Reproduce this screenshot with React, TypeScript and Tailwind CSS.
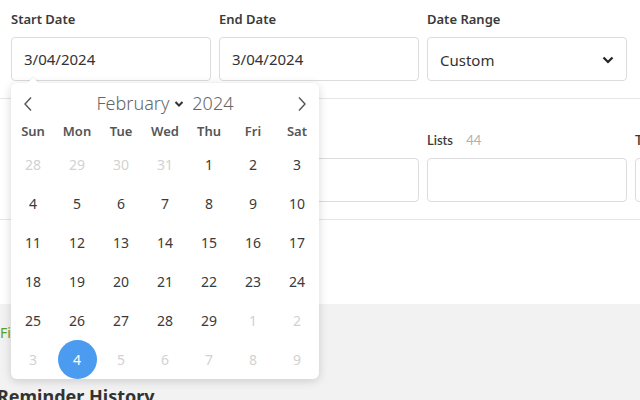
import React from "react";

const font = { fontFamily: '"Noto Sans", "Open Sans", sans-serif' };

type Cell = { d: number; muted?: boolean; selected?: boolean };

const weeks: Cell[][] = [
  [{ d: 28, muted: true }, { d: 29, muted: true }, { d: 30, muted: true }, { d: 31, muted: true }, { d: 1 }, { d: 2 }, { d: 3 }],
  [{ d: 4 }, { d: 5 }, { d: 6 }, { d: 7 }, { d: 8 }, { d: 9 }, { d: 10 }],
  [{ d: 11 }, { d: 12 }, { d: 13 }, { d: 14 }, { d: 15 }, { d: 16 }, { d: 17 }],
  [{ d: 18 }, { d: 19 }, { d: 20 }, { d: 21 }, { d: 22 }, { d: 23 }, { d: 24 }],
  [{ d: 25 }, { d: 26 }, { d: 27 }, { d: 28 }, { d: 29 }, { d: 1, muted: true }, { d: 2, muted: true }],
  [{ d: 3, muted: true }, { d: 4, selected: true }, { d: 5, muted: true }, { d: 6, muted: true }, { d: 7, muted: true }, { d: 8, muted: true }, { d: 9, muted: true }],
];

const dayNames = ["Sun", "Mon", "Tue", "Wed", "Thu", "Fri", "Sat"];

function Field({ label, children }: { label: React.ReactNode; children?: React.ReactNode }) {
  return (
    <div className="flex w-[200px] shrink-0 flex-col gap-[8px]">
      <div className="h-[20px] text-[13px] leading-[20px] font-semibold text-[#3a3a3a]">{label}</div>
      <div className="flex h-[44px] items-center rounded-[4px] border border-[#dcdcdc] bg-white px-[12px] text-[15px] text-[#333]">
        {children}
      </div>
    </div>
  );
}

function Chevron({ dir }: { dir: "left" | "right" }) {
  return (
    <svg width="10" height="16" viewBox="0 0 10 16" fill="none" stroke="#555" strokeWidth="1.4">
      {dir === "left" ? <path d="M8 1.5 L2 8 L8 14.5" /> : <path d="M2 1.5 L8 8 L2 14.5" />}
    </svg>
  );
}

function Calendar() {
  return (
    <div className="absolute left-[11px] top-[83px] h-[296px] w-[308px] rounded-[6px] bg-white shadow-[0_2px_10px_rgba(0,0,0,0.16)]">
      <div className="absolute left-[18px] top-[-4px] h-[8px] w-[8px] rotate-45 bg-white shadow-[-1px_-1px_1px_rgba(0,0,0,0.06)]" />
      <div className="relative flex h-[37px] items-center justify-between px-[12px] pt-[4px]">
        <Chevron dir="left" />
        <div className="flex items-center text-[18px] font-light text-[#666]">
          <span>February</span>
          <svg className="ml-[5px] mr-[8px]" width="10" height="8" viewBox="0 0 10 8" fill="none" stroke="#333" strokeWidth="2">
            <path d="M1.5 2 L5 5.5 L8.5 2" />
          </svg>
          <span>2024</span>
        </div>
        <Chevron dir="right" />
      </div>
      <div className="grid h-[24px] grid-cols-7 items-center">
        {dayNames.map((n) => (
          <div key={n} className="text-center text-[13px] font-semibold text-[#555]">
            {n}
          </div>
        ))}
      </div>
      <div className="mt-[1px] grid grid-cols-7">
        {weeks.flat().map((c, i) => (
          <div key={i} className="flex h-[39px] items-center justify-center">
            {c.selected ? (
              <div className="flex h-[39px] w-[39px] items-center justify-center rounded-full bg-[#4b9bf0] text-[14px] text-white">
                {c.d}
              </div>
            ) : (
              <span className={"text-[14px] " + (c.muted ? "text-[#d2d2d2]" : "text-[#3a3a3a]")}>{c.d}</span>
            )}
          </div>
        ))}
      </div>
    </div>
  );
}

export default function App() {
  return (
    <div className="relative h-[400px] w-[640px] overflow-hidden bg-white" style={font}>
      <div className="flex gap-[8px] border-b border-[#e6e6e6] px-[11px] pt-[9px] pb-[17px]">
        <Field label="Start Date">3/04/2024</Field>
        <Field label="End Date">3/04/2024</Field>
        <Field label="Date Range">
          <div className="flex w-full items-center justify-between pt-[2px]">
            <span>Custom</span>
            <svg width="12" height="8" viewBox="0 0 12 8" fill="none" stroke="#222" strokeWidth="2.2">
              <path d="M1.5 1.5 L6 6 L10.5 1.5" />
            </svg>
          </div>
        </Field>
      </div>
      <div
        className="flex gap-[8px] border-b border-[#e6e6e6] px-[11px] pt-[31px] pb-[17px]"
        style={{ fontFamily: 'Lato, "Noto Sans", sans-serif' }}
      >
        <Field label="Recipients" />
        <Field label="Members" />
        <Field
          label={
            <span>
              Lists <span className="ml-[10px] font-normal text-[#b0b0b0]">44</span>
            </span>
          }
        />
        <Field label="Tags" />
      </div>
      <div className="h-[84px]" />
      <div className="h-[200px] bg-[#f2f2f2]">
        <div className="pt-[18px] text-[14px] text-[#5aa02c]">Filters</div>
        <div className="mt-[40px] ml-[-3px] text-[18px] font-bold text-[#333]">Reminder History</div>
      </div>
      <Calendar />
    </div>
  );
}
